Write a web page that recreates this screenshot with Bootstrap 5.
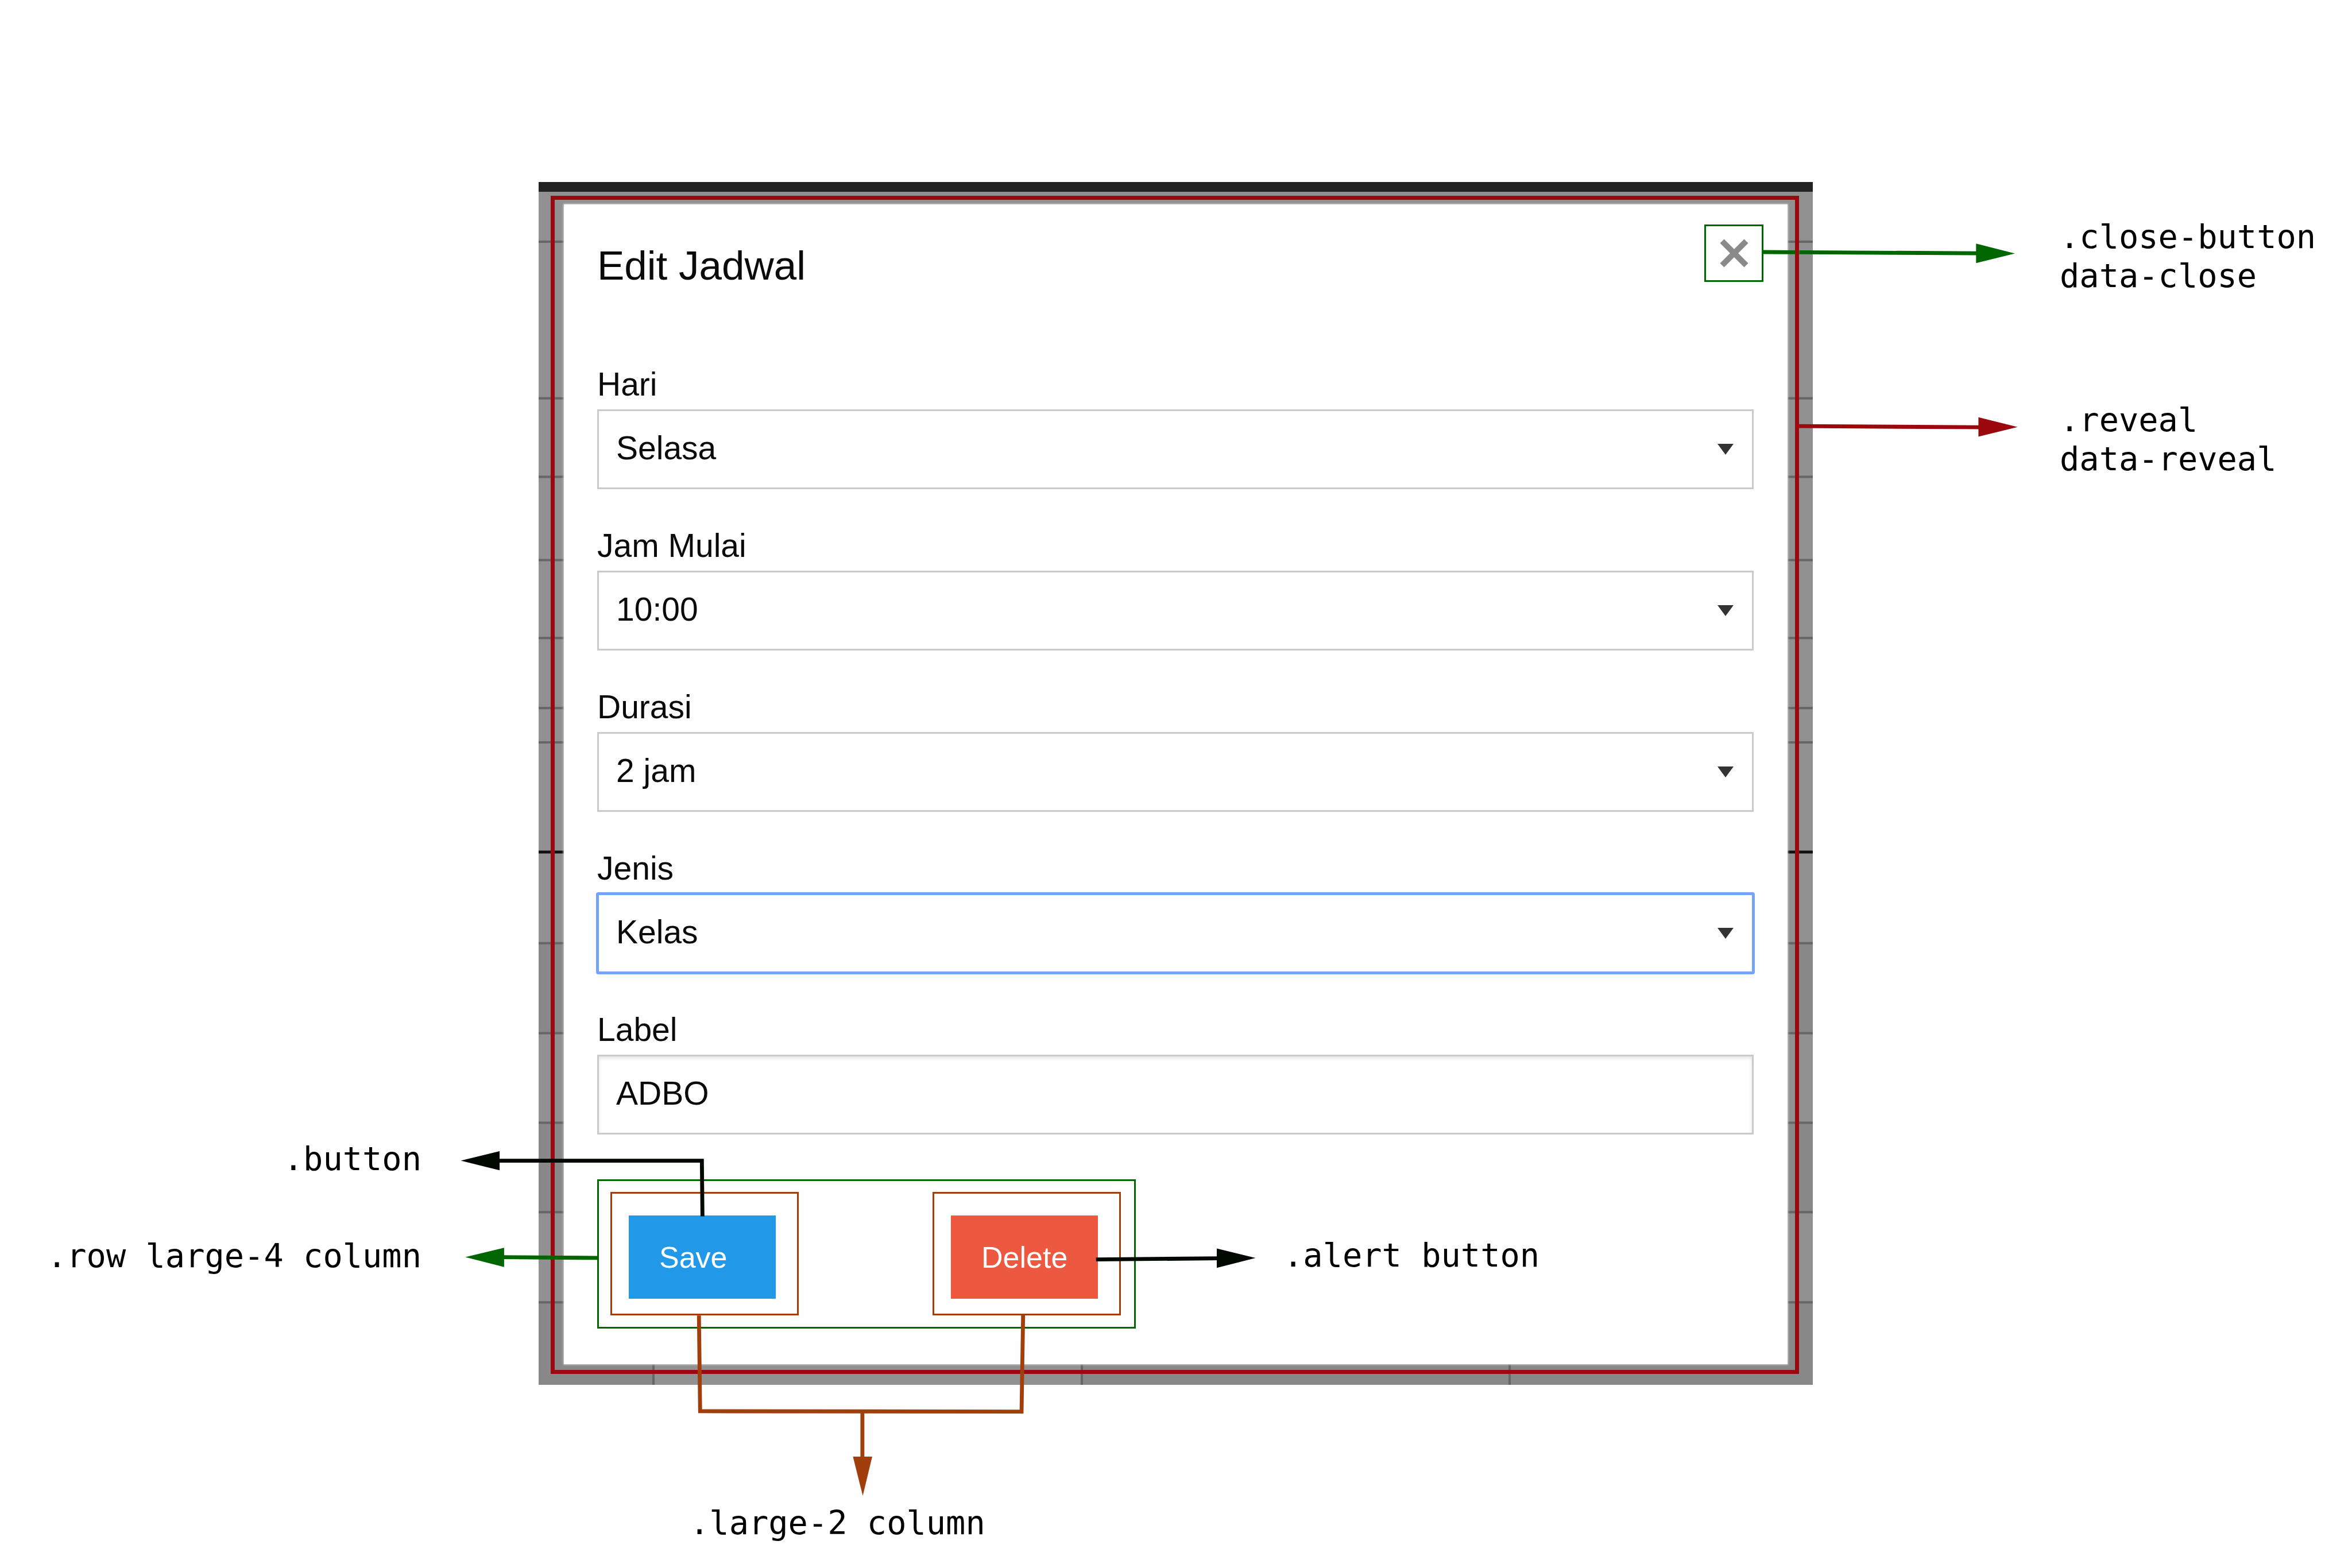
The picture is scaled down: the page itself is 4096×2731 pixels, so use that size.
<!DOCTYPE html>
<html lang="id">
<head>
<meta charset="utf-8">
<meta name="viewport" content="width=device-width, initial-scale=1">
<title>Edit Jadwal</title>
<link href="https://cdn.jsdelivr.net/npm/bootstrap@5.3.0/dist/css/bootstrap.min.css" rel="stylesheet">
<style>
  :root { --red: #9b090e; --green: #006600; --brown: #a03f0c; --ink: #000800; }
  body { background: #fff; font-family: "Liberation Sans", Arial, sans-serif; color: #0a0a0a; }
  .sheet { display: grid; grid-template-columns: 938px minmax(0, 1fr) 939px; padding-top: 317px; min-height: 100vh; }
  .note { font-family: "DejaVu Sans Mono", "Liberation Mono", monospace; font-size: 57px; line-height: 68px; color: #000; white-space: pre; }

  .notes-left { padding: 1667px 204px 0 0; }
  .notes-left .note + .note { margin-top: 101px; }
  .notes-right { padding: 61px 0 0 430px; }
  .notes-right .note + .note { margin-top: 183px; }
  .note-alert { margin: 98px 0 0 257px; }
  .note-columns { margin: 206px 0 0 263px; }

  /* dimmed timetable behind the dialog */
  .backdrop-page { border-top: 17px solid #222; background: #919191; padding: 7px 24px 19px 21px; }
  .reveal-outline { border: 7px solid var(--red); padding: 8px 13px 10px 16px; }
  .dialog { background: #fefefe; padding: 67px 59px 62px 58px; box-shadow: 0 0 3px 1px #cfcfcf; }
  .dialog-title { font-size: 71px; line-height: 80px; font-weight: 400; margin: 0 0 134px; color: #0a0a0a; }
  .close-box { top: 35px; right: 42px; width: 103px; height: 100px; border: 3px solid var(--green); background: transparent; }

  .field { margin-bottom: 66px; }
  .field-label { font-size: 57px; line-height: 64px; margin-bottom: 12px; color: #0a0a0a; }
  .field-box { height: 139px; border: 3px solid #cacaca; border-radius: 0; background-color: #fefefe; font-size: 57px; line-height: 64px; padding: 32px 90px 37px 30px; color: #0a0a0a; }
  select.field-box { background-image: url("data:image/svg+xml,%3Csvg xmlns='http://www.w3.org/2000/svg' viewBox='0 0 28 19'%3E%3Cpath d='M0 0h28L14 19z' fill='%23333'/%3E%3C/svg%3E"); background-size: 28px 19px; background-position: right 32px center; }
  input.field-box { box-shadow: inset 0 3px 6px rgba(10, 10, 10, .1); }
  .field-active { border-color: #74a5f5; box-shadow: 0 0 0 2px #74a5f5; border-radius: 2px; }

  .actions { margin-top: 78px; }
  .outline-row { border: 3px solid var(--green); width: 938px; padding: 19px 23px 20px 20px; }
  .outline-col { border: 3px solid var(--brown); padding: 38px 37px 26px 29px; }
  .action-btn { width: 256px; height: 145px; border: 0; border-radius: 0; padding: 0 0 0 53px; font-size: 52px; line-height: 60px; color: #fefefe; text-align: left; }
  .btn-save { background: #2199e8; }
  .btn-delete { background: #ec5840; }
</style>
<script src="https://cdn.jsdelivr.net/npm/bootstrap@5.3.0/dist/js/bootstrap.bundle.min.js"></script>
</head>
<body>
<main class="sheet position-relative overflow-hidden">
  <aside class="notes-left d-flex flex-column align-items-end">
    <div class="note">.button</div>
    <div class="note">.row large-4 column</div>
  </aside>

  <div>
    <div class="backdrop-page position-relative">
      <!-- timetable rules and shaded rows -->
      <svg class="position-absolute top-0 start-0 w-100 h-100" viewBox="0 0 2219 2080" preserveAspectRatio="none" aria-hidden="true">
        <g fill="#888">
          <path d="M0 1310H2219V1467H0zM0 1623H2219V1779H0zM0 1936H200V2080H0zM946 1936H2219V2080H946z"/>
        </g>
        <g stroke="#666" stroke-width="4">
          <path d="M0 87H2219M0 360H2219M0 497H2219M0 642H2219M0 778H2219M0 900H2219M0 960H2219M0 1310H2219M0 1467H2219M0 1623H2219M0 1779H2219M0 1936H2219M200 2000V2080M946 2000V2080M1691 2000V2080"/>
        </g>
        <path d="M0 1151H2219" stroke="#111" stroke-width="5"/>
      </svg>

      <div class="reveal-outline position-relative">
        <form class="dialog position-relative" onsubmit="return false">
          <h1 class="dialog-title">Edit Jadwal</h1>
          <button type="button" class="close-box position-absolute d-flex align-items-center justify-content-center p-0" aria-label="Close">
            <svg width="50" height="50" viewBox="0 0 50 50"><path d="M4 4L46 46M46 4L4 46" stroke="#8a8a8a" stroke-width="10"/></svg>
          </button>

          <div class="field">
            <label class="field-label d-block" for="hari">Hari</label>
            <select class="form-select field-box" id="hari"><option>Selasa</option></select>
          </div>
          <div class="field">
            <label class="field-label d-block" for="jam">Jam Mulai</label>
            <select class="form-select field-box" id="jam"><option>10:00</option></select>
          </div>
          <div class="field">
            <label class="field-label d-block" for="durasi">Durasi</label>
            <select class="form-select field-box" id="durasi"><option>2 jam</option></select>
          </div>
          <div class="field">
            <label class="field-label d-block" for="jenis">Jenis</label>
            <select class="form-select field-box field-active" id="jenis"><option>Kelas</option></select>
          </div>
          <div>
            <label class="field-label d-block" for="label">Label</label>
            <input class="form-control field-box" id="label" type="text" value="ADBO">
          </div>

          <div class="actions d-flex align-items-start">
            <div class="outline-row d-flex justify-content-between flex-shrink-0">
              <div class="outline-col"><button type="submit" class="btn action-btn btn-save">Save</button></div>
              <div class="outline-col"><button type="button" class="btn action-btn btn-delete">Delete</button></div>
            </div>
            <div class="note note-alert">.alert button</div>
          </div>
        </form>
      </div>
    </div>
    <div class="note note-columns">.large-2 column</div>
  </div>

  <aside class="notes-right">
    <div class="note">.close-button
data-close</div>
    <div class="note">.reveal
data-reveal</div>
  </aside>

  <!-- connectors between the notes and the dialog parts -->
  <svg class="position-absolute top-0 start-0 w-100 h-100 pe-none" viewBox="0 0 6000 4000" preserveAspectRatio="none" aria-hidden="true" fill="none" stroke-width="10">
    <g stroke="#006600">
      <path d="M4497 643L4580 643.5M4590 643.5L5043 646M1284 3207L1524 3209"/>
      <path d="M5041 621.5L5140 646.5L5041 671zM1286 3183L1187 3207L1286 3232z" fill="#006600" stroke="none"/>
    </g>
    <g stroke="#9b090e">
      <path d="M4588 1087L5048 1090"/>
      <path d="M5047 1064.5L5147 1089.5L5047 1114z" fill="#9b090e" stroke="none"/>
    </g>
    <g stroke="#000800">
      <path d="M1273 2961H1790.500L1792 3103M2796 3213L3105 3210"/>
      <path d="M1274.500 2936.500L1175.500 2961L1274.500 2985.500zM3104 3185L3203 3209L3104 3234.500z" fill="#000800" stroke="none"/>
    </g>
    <g stroke="#a03f0c">
      <path d="M1783 3356L1786 3600L2606 3601L2610 3353M2200 3600V3717"/>
      <path d="M2176 3716H2225L2201 3816z" fill="#a03f0c" stroke="none"/>
    </g>
  </svg>
</main>
</body>
</html>
